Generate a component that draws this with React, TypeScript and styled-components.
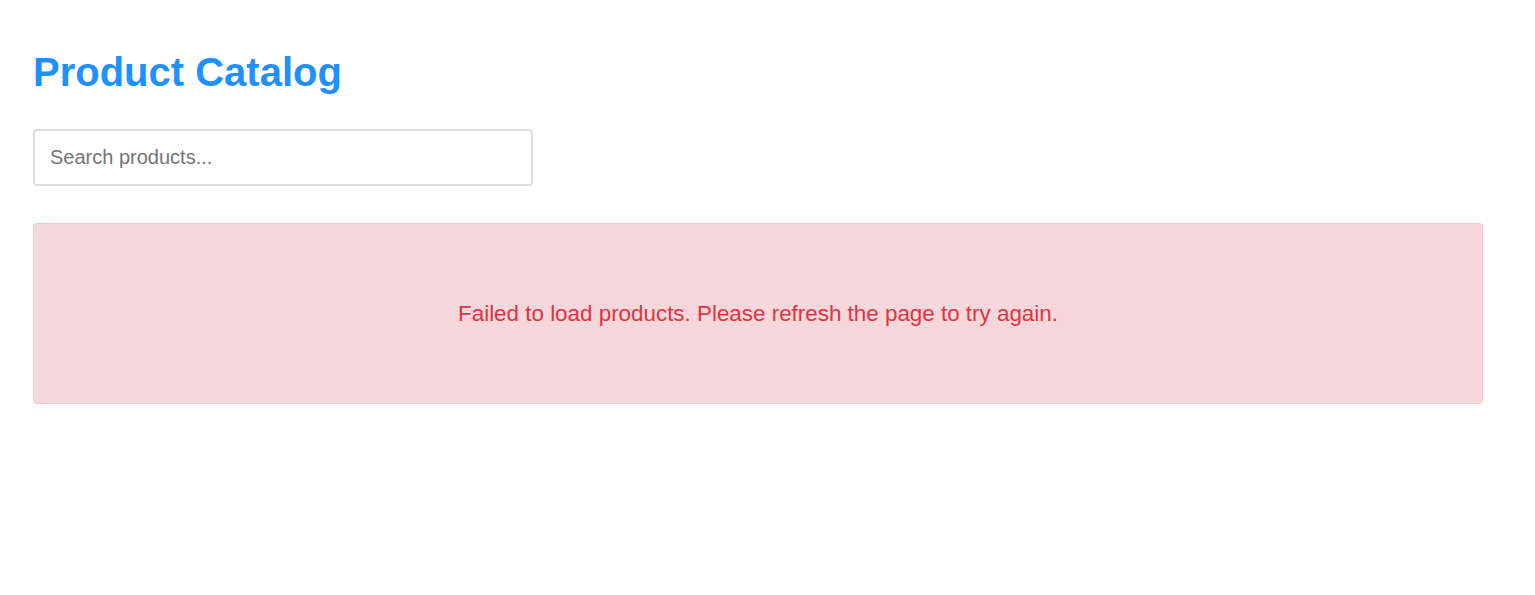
import React from "react";
import styled, { createGlobalStyle } from "styled-components";

const Global = createGlobalStyle`
  html, body { margin: 0; padding: 0; background: #fff; }
  body { font-family: "Liberation Sans", Arial, sans-serif; }
  * { box-sizing: border-box; }
`;

const Page = styled.div`
  padding: 49px 52px 40px 33px;
  display: flex;
  flex-direction: column;
`;

const Title = styled.h1`
  margin: 0 0 34px;
  font-size: 40px;
  line-height: 46px;
  font-weight: 700;
  color: #1e90ff;
`;

const Search = styled.input`
  width: 500px;
  height: 57px;
  padding: 0 15px;
  border: 2px solid #ddd;
  border-radius: 4px;
  font-family: "Liberation Sans", Arial, sans-serif;
  font-size: 20px;
  color: #333;
  outline: none;
  margin-bottom: 37px;
  &::placeholder { color: #757575; }
`;

const ErrorBox = styled.div`
  width: 1450px;
  height: 181px;
  display: flex;
  align-items: center;
  justify-content: center;
  background: #f8d7da;
  border: 1px solid #f5c6cb;
  border-radius: 4px;
  color: #dc3545;
  font-size: 22.4px;
`;

export default function App() {
  return (
    <>
      <Global />
      <Page>
        <Title>Product Catalog</Title>
        <Search placeholder="Search products..." />
        <ErrorBox>Failed to load products. Please refresh the page to try again.</ErrorBox>
      </Page>
    </>
  );
}
